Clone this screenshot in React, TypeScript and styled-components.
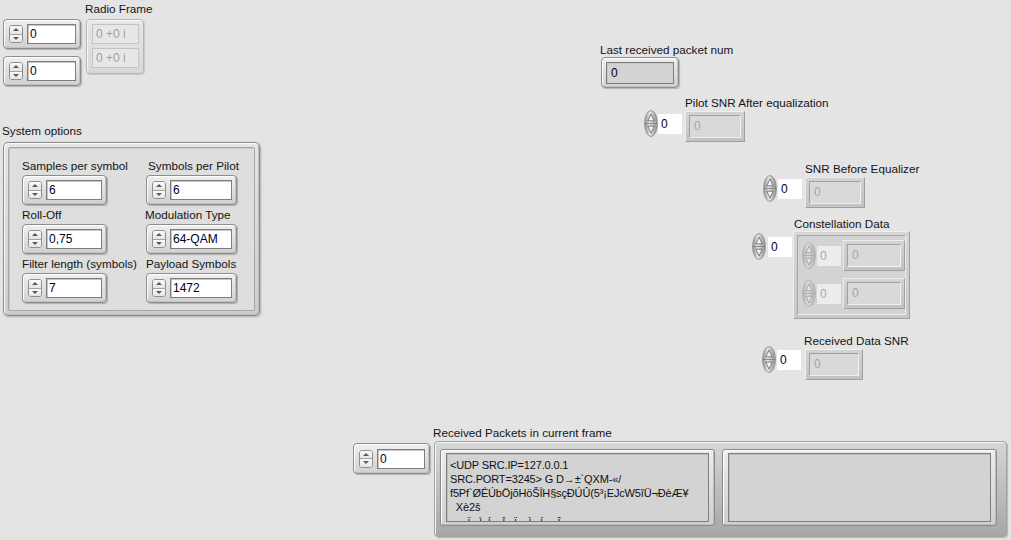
import React from 'react';
import styled, { createGlobalStyle } from 'styled-components';

const GlobalStyle = createGlobalStyle`
  html, body {
    margin: 0;
    padding: 0;
    background: #e4e4e4;
  }
  body {
    font-family: "Liberation Sans", Arial, sans-serif;
    font-size: 12px;
  }
`;

const Panel = styled.div`
  position: relative;
  width: 1011px;
  height: 540px;
  overflow: hidden;
  background: #e4e4e4;
  color: #141414;
`;

// front panel objects sit on a free canvas, so each one is placed by its coordinates
const Placed = styled.div<{ $x: number; $y: number }>`
  position: absolute;
  left: ${(p) => p.$x}px;
  top: ${(p) => p.$y}px;
`;

const Label = styled.div<{ $dx?: number }>`
  margin-left: ${(p) => p.$dx ?? 0}px;
  font-size: 11.7px;
  line-height: 14px;
  white-space: nowrap;
  color: #141414;
`;

const Row = styled.div<{ $gap?: number }>`
  display: flex;
  align-items: flex-start;
  gap: ${(p) => p.$gap ?? 3}px;
`;

const Stack = styled.div<{ $gap?: number }>`
  display: flex;
  flex-direction: column;
  align-items: flex-start;
  gap: ${(p) => p.$gap ?? 0}px;
`;

const Offset = styled.div<{ $top: number }>`
  margin-top: ${(p) => p.$top}px;
`;

/* ---------- modern numeric ---------- */

const SpinBox = styled.div`
  flex: none;
  width: 14px;
  height: 18px;
  box-sizing: border-box;
  display: flex;
  flex-direction: column;
  border: 1px solid #8f8f8f;
  border-radius: 3px;
  overflow: hidden;
  background: #f4f4f4;
`;

const SpinHalf = styled.div<{ $down?: boolean }>`
  flex: 1;
  display: flex;
  align-items: center;
  justify-content: center;
  background: linear-gradient(#fbfbfb, #e4e4e4);
  border-top: ${(p) => (p.$down ? '1px solid #a3a3a3' : 'none')};

  &::after {
    content: '';
    width: 0;
    height: 0;
    border-left: 3px solid transparent;
    border-right: 3px solid transparent;
    ${(p) => (p.$down ? 'border-top: 3px solid #5a5a5a;' : 'border-bottom: 3px solid #5a5a5a;')}
  }
`;

const NumFrame = styled.div<{ $w: number; $h?: number; $indicator?: boolean }>`
  display: flex;
  align-items: center;
  gap: 4px;
  width: ${(p) => p.$w}px;
  height: ${(p) => p.$h ?? 30}px;
  box-sizing: border-box;
  padding: ${(p) => (p.$indicator ? '0 4px' : '0 4px 0 5px')};
  border: 1px solid #8d8d8d;
  border-radius: 4px;
  background: linear-gradient(#efefef, #d1d1d1);
  box-shadow: inset 1px 1px 0 #ffffff, inset -1px -1px 0 #c2c2c2, 1px 1px 1px rgba(0, 0, 0, 0.22);
`;

const NumField = styled.div<{ $indicator?: boolean }>`
  flex: 1;
  height: ${(p) => (p.$indicator ? 22 : 20)}px;
  box-sizing: border-box;
  padding-left: ${(p) => (p.$indicator ? 4 : 2)}px;
  background: ${(p) => (p.$indicator ? '#d3d3d3' : '#ffffff')};
  border: 1px solid #7d7d7d;
  box-shadow: inset 1px 1px 0 #c6c6c6;
  font-size: 12px;
  line-height: ${(p) => (p.$indicator ? 20 : 18)}px;
  color: #00001e;
  white-space: nowrap;
`;

const NumControl = ({ w, h, value }: { w: number; h?: number; value: string }) => (
  <NumFrame $w={w} $h={h}>
    <SpinBox>
      <SpinHalf />
      <SpinHalf $down />
    </SpinBox>
    <NumField>{value}</NumField>
  </NumFrame>
);

const NumIndicator = ({ w, value }: { w: number; value: string }) => (
  <NumFrame $w={w} $h={31} $indicator>
    <NumField $indicator>{value}</NumField>
  </NumFrame>
);

/* ---------- greyed complex array (Radio Frame) ---------- */

const DimArray = styled.div`
  display: flex;
  flex-direction: column;
  gap: 4px;
  width: 58px;
  height: 55px;
  box-sizing: border-box;
  padding: 4px 0 0 5px;
  border: 1px solid #b6b6b6;
  border-radius: 4px;
  background: linear-gradient(#e6e6e6, #d8d8d8);
  box-shadow: inset 1px 1px 0 #f7f7f7, 1px 1px 1px rgba(0, 0, 0, 0.12);
`;

const DimCell = styled.div`
  width: 47px;
  height: 20px;
  box-sizing: border-box;
  padding-left: 3px;
  background: #e7e7e7;
  border: 1px solid #c4c4c4;
  color: #a0a0a0;
  line-height: 18px;
  white-space: nowrap;
`;

/* ---------- cluster ---------- */

const ClusterFrame = styled.div`
  width: 257px;
  height: 174px;
  box-sizing: border-box;
  padding: 4px;
  border: 1px solid #8c8c8c;
  border-radius: 5px;
  background: linear-gradient(#e6e6e6, #cdcdcd);
  box-shadow: inset 1px 1px 0 #fbfbfb, inset -1px -1px 0 #bcbcbc, 1px 1px 2px rgba(0, 0, 0, 0.25);
`;

const ClusterInner = styled.div`
  height: 100%;
  box-sizing: border-box;
  display: grid;
  grid-template-columns: 85px 91px;
  grid-auto-rows: 46px;
  column-gap: 39px;
  row-gap: 3px;
  align-content: start;
  padding: 11px 0 0 13px;
  border: 1px solid #a6a6a6;
  border-radius: 2px;
  background: #dedede;
  box-shadow: inset 1px 1px 0 #c9c9c9;
`;

const Cell = styled.div`
  display: flex;
  flex-direction: column;
  gap: 2px;
`;

/* ---------- classic controls ---------- */

const SpinSvg = styled.svg<{ $dim?: boolean }>`
  flex: none;
  display: block;
  opacity: ${(p) => (p.$dim ? 0.5 : 1)};
`;

const RoundSpin = ({ dim }: { dim?: boolean }) => (
  <SpinSvg $dim={dim} width="14" height="27" viewBox="0 0 14 27">
    <defs>
      <linearGradient id="rs-body" x1="0" y1="0" x2="1" y2="0">
        <stop offset="0" stopColor="#8e8e8e" />
        <stop offset="0.4" stopColor="#e4e4e4" />
        <stop offset="1" stopColor="#8e8e8e" />
      </linearGradient>
    </defs>
    <ellipse cx="7" cy="13.5" rx="6.4" ry="13" fill="url(#rs-body)" stroke="#8a8a8a" strokeWidth="0.8" />
    <line x1="0.8" y1="13.5" x2="13.2" y2="13.5" stroke="#7c7c7c" strokeWidth="0.8" />
    <path d="M7 4 L10.2 10.8 L3.8 10.8 Z" fill="#f2f2f2" stroke="#666" strokeWidth="0.8" />
    <path d="M3.8 16.2 L10.2 16.2 L7 23 Z" fill="#f2f2f2" stroke="#666" strokeWidth="0.8" />
  </SpinSvg>
);

const ClassicNumWrap = styled.div<{ $gap?: number }>`
  display: flex;
  align-items: center;
  gap: ${(p) => p.$gap ?? 0}px;
`;

const ClassicField = styled.div<{ $dim?: boolean }>`
  width: 24px;
  height: 20px;
  box-sizing: border-box;
  padding-left: 3px;
  background: ${(p) => (p.$dim ? '#ececec' : '#ffffff')};
  color: ${(p) => (p.$dim ? '#a8a8a8' : '#00001e')};
  line-height: 20px;
`;

const ClassicNum = ({ gap, dim }: { gap?: number; dim?: boolean }) => (
  <ClassicNumWrap $gap={gap}>
    <RoundSpin dim={dim} />
    <ClassicField $dim={dim}>0</ClassicField>
  </ClassicNumWrap>
);

const ClassicInd = styled.div<{ $w?: number }>`
  width: ${(p) => p.$w ?? 60}px;
  height: 31px;
  box-sizing: border-box;
  padding: 3px;
  background: linear-gradient(#d3d3d3, #c3c3c3);
  border: 1px solid;
  border-color: #ededed #a0a0a0 #a0a0a0 #ededed;
`;

const ClassicIndField = styled.div`
  height: 100%;
  box-sizing: border-box;
  padding-left: 4px;
  background: #d9d9d9;
  border: 1px solid;
  border-color: #a0a0a0 #f0f0f0 #f0f0f0 #a0a0a0;
  color: #a6a6a6;
  line-height: 21px;
`;

const ClassicArray = styled.div`
  width: 117px;
  height: 88px;
  box-sizing: border-box;
  padding: 3px;
  background: linear-gradient(#d6d6d6, #c8c8c8);
  border: 1px solid;
  border-color: #eeeeee #a0a0a0 #a0a0a0 #eeeeee;
`;

const ClassicArrayInner = styled.div`
  height: 100%;
  box-sizing: border-box;
  display: flex;
  flex-direction: column;
  gap: 7px;
  padding: 4px 0 0 4px;
  background: #d3d3d3;
  border: 1px solid;
  border-color: #a6a6a6 #ececec #ececec #a6a6a6;
`;

const ArrayElem = styled.div`
  display: flex;
  align-items: center;
  gap: 2px;
`;

/* ---------- string array ---------- */

const StrArray = styled.div`
  display: flex;
  gap: 7px;
  width: 573px;
  height: 96px;
  box-sizing: border-box;
  padding: 7px 0 0 5px;
  border: 1px solid #a2a2a2;
  border-radius: 4px;
  background: linear-gradient(#d6d6d6, #a7a7a7);
  box-shadow: inset 1px 1px 0 #f6f6f6, 1px 1px 1px rgba(0, 0, 0, 0.2);
`;

const StrElem = styled.div`
  width: 275px;
  height: 77px;
  box-sizing: border-box;
  padding: 3px 5px;
  border: 1px solid #8a8a8a;
  border-radius: 3px;
  background: linear-gradient(#ededed, #cfcfcf);
  box-shadow: inset 1px 1px 0 #ffffff, inset -1px -1px 0 #bdbdbd;
`;

const StrField = styled.div`
  height: 100%;
  box-sizing: border-box;
  overflow: hidden;
  padding: 4px 0 0 3px;
  background: #d3d3d3;
  border: 1px solid #7e7e7e;
  box-shadow: inset 1px 1px 0 #bdbdbd;
  font-size: 11px;
  letter-spacing: -0.15px;
  line-height: 14px;
  color: #101010;
  white-space: pre;
`;

const packetText = [
  '<UDP SRC.IP=127.0.0.1',
  'SRC.PORT=3245> G D\u2192\u00b1`QXM-\u00ab/',
  'f5Pf`\u00d8\u00ca\u00dab\u00d6j\u00f5H\u00f6\u0160\u00ceH\u00a7s\u00e7\u00d0\u00da\u00db(5\u00b3\u00a1EJcW5\u00ee\u00dc\u00ac\u00d0\u00e8\u00c6\u00a5',
  '  X\u00e82\u0161',
  '      \u00ef   \u00ec  \u00ed    \u00ee   \u00ef    \u00ec   \u00ed     \u00ee',
].join('\n');

const systemOptions = [
  { label: 'Samples per symbol', value: '6', w: 85, dx: 0 },
  { label: 'Symbols per Pilot', value: '6', w: 91, dx: 2 },
  { label: 'Roll-Off', value: '0,75', w: 85, dx: 0 },
  { label: 'Modulation Type', value: '64-QAM', w: 91, dx: -1 },
  { label: 'Filter length (symbols)', value: '7', w: 85, dx: 0 },
  { label: 'Payload Symbols', value: '1472', w: 91, dx: 0 },
];

export default function App() {
  return (
    <Panel>
      <GlobalStyle />

      <Placed $x={3} $y={19}>
        <NumControl w={78} value="0" />
      </Placed>
      <Placed $x={3} $y={56}>
        <NumControl w={78} value="0" />
      </Placed>

      <Placed $x={86} $y={2}>
        <Stack $gap={3}>
          <Label $dx={-1}>Radio Frame</Label>
          <DimArray>
            <DimCell>0 +0 i</DimCell>
            <DimCell>0 +0 i</DimCell>
          </DimArray>
        </Stack>
      </Placed>

      <Placed $x={3} $y={124}>
        <Stack $gap={4}>
          <Label $dx={-1}>System options</Label>
          <ClusterFrame>
            <ClusterInner>
              {systemOptions.map((o) => (
                <Cell key={o.label}>
                  <Label $dx={o.dx}>{o.label}</Label>
                  <NumControl w={o.w} value={o.value} />
                </Cell>
              ))}
            </ClusterInner>
          </ClusterFrame>
        </Stack>
      </Placed>

      <Placed $x={601} $y={43}>
        <Stack>
          <Label $dx={-1}>Last received packet num</Label>
          <NumIndicator w={78} value="0" />
        </Stack>
      </Placed>

      <Placed $x={644} $y={96}>
        <Row>
          <Offset $top={14}>
            <ClassicNum />
          </Offset>
          <Stack $gap={1}>
            <Label>Pilot SNR After equalization</Label>
            <ClassicInd>
              <ClassicIndField>0</ClassicIndField>
            </ClassicInd>
          </Stack>
        </Row>
      </Placed>

      <Placed $x={763} $y={162}>
        <Row>
          <Offset $top={13}>
            <ClassicNum gap={1} />
          </Offset>
          <Stack $gap={1}>
            <Label>SNR Before Equalizer</Label>
            <ClassicInd>
              <ClassicIndField>0</ClassicIndField>
            </ClassicInd>
          </Stack>
        </Row>
      </Placed>

      <Placed $x={752} $y={217}>
        <Row $gap={1}>
          <Offset $top={16}>
            <ClassicNum gap={2} />
          </Offset>
          <Stack>
            <Label $dx={1}>Constellation Data</Label>
            <ClassicArray>
              <ClassicArrayInner>
                {[0, 1].map((i) => (
                  <ArrayElem key={i}>
                    <ClassicNum gap={1} dim />
                    <ClassicInd $w={62}>
                      <ClassicIndField>0</ClassicIndField>
                    </ClassicInd>
                  </ArrayElem>
                ))}
              </ClassicArrayInner>
            </ClassicArray>
          </Stack>
        </Row>
      </Placed>

      <Placed $x={762} $y={334}>
        <Row $gap={4}>
          <Offset $top={12}>
            <ClassicNum gap={1} />
          </Offset>
          <Stack $gap={1}>
            <Label $dx={-1}>Received Data SNR</Label>
            <ClassicInd $w={58}>
              <ClassicIndField>0</ClassicIndField>
            </ClassicInd>
          </Stack>
        </Row>
      </Placed>

      <Placed $x={353} $y={426}>
        <Row $gap={4}>
          <Offset $top={17}>
            <NumControl w={77} h={31} value="0" />
          </Offset>
          <Stack $gap={1}>
            <Label $dx={-1}>Received Packets in current frame</Label>
            <StrArray>
              <StrElem>
                <StrField>{packetText}</StrField>
              </StrElem>
              <StrElem>
                <StrField />
              </StrElem>
            </StrArray>
          </Stack>
        </Row>
      </Placed>
    </Panel>
  );
}
